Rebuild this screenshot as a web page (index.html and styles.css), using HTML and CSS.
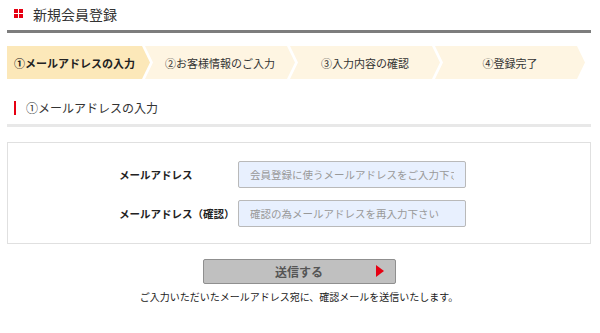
FILE: index.html
```html
<!DOCTYPE html>
<html lang="ja">
<head>
<meta charset="utf-8">
<link rel="stylesheet" href="styles.css">
</head>
<body>
<div class="page">
  <header class="page-head">
    <span class="head-icon"><i></i><i></i><i></i><i></i></span>
    <h1 class="head-title">新規会員登録</h1>
  </header>

  <ol class="steps">
    <li class="step step-first step-active">①メールアドレスの入力</li>
    <li class="step">②お客様情報のご入力</li>
    <li class="step">③入力内容の確認</li>
    <li class="step">④登録完了</li>
  </ol>

  <h2 class="section-title">①メールアドレスの入力</h2>

  <div class="form-box">
    <div class="form-grid">
      <label class="form-label" for="mail">メールアドレス</label>
      <input class="form-input" id="mail" type="text" placeholder="会員登録に使うメールアドレスをご入力下さい">
      <label class="form-label" for="mail2">メールアドレス（確認）</label>
      <input class="form-input" id="mail2" type="text" placeholder="確認の為メールアドレスを再入力下さい">
    </div>
  </div>

  <div class="actions">
    <button class="submit-btn" type="button"><span class="btn-text">送信する</span><span class="btn-arrow"></span></button>
    <p class="note">ご入力いただいたメールアドレス宛に、確認メールを送信いたします。</p>
  </div>
</div>
</body>
</html>
```

FILE: styles.css
```css
* { box-sizing: border-box; }
html, body { margin: 0; padding: 0; background: #fff; }
body {
  font-family: "Noto Sans CJK JP", "Noto Sans", sans-serif;
  color: #333;
}
.page {
  width: 584px;
  margin-left: 7px;
}
.page-head {
  display: flex;
  align-items: center;
  height: 33px;
  border-bottom: 3px solid #7d7d7d;
  padding-left: 7px;
  padding-bottom: 3px;
}
.head-icon {
  display: grid;
  grid-template-columns: 4px 4px;
  grid-template-rows: 4px 4px;
  gap: 1px;
  margin-right: 10px;
}
.head-icon i { display: block; width: 4px; height: 4px; background: #e60012; }
.head-title {
  margin: 0;
  font-size: 14px;
  font-weight: normal;
  color: #333;
  line-height: 1;
}
.steps {
  list-style: none;
  margin: 13px 0 0;
  padding: 0;
  display: flex;
  height: 33px;
}
.step {
  flex: 0 0 150px;
  margin-right: -5px;
  height: 33px;
  display: flex;
  align-items: center;
  justify-content: center;
  padding: 0 8px;
  font-size: 11px;
  color: #333;
  background: #fef5e2;
  white-space: nowrap;
  clip-path: polygon(0 0, calc(100% - 8px) 0, 100% 50%, calc(100% - 8px) 100%, 0 100%, 8px 50%);
}
.step-first {
  clip-path: polygon(0 0, calc(100% - 8px) 0, 100% 50%, calc(100% - 8px) 100%, 0 100%);
  padding: 0 8px 0 0;
  flex-basis: 143px;
}
.step-active {
  background: #fce8b9;
  font-weight: bold;
  color: #222;
}
.section-title {
  margin: 21px 0 0;
  font-size: 12px;
  font-weight: normal;
  color: #333;
  line-height: 16px;
  padding: 0 0 8px 19px;
  position: relative;
  border-bottom: 3px solid #e8e8e8;
}
.section-title::before {
  content: "";
  position: absolute;
  left: 7px;
  top: 1px;
  width: 2px;
  height: 14px;
  background: #e60012;
}
.form-box {
  margin-top: 15px;
  border: 1px solid #e0e0e0;
  padding: 18px 0 16px 111px;
}
.form-grid {
  display: grid;
  grid-template-columns: 119px 228px;
  row-gap: 12px;
  align-items: center;
}
.form-label {
  font-size: 10.5px;
  font-weight: bold;
  color: #222;
  white-space: nowrap;
}
.form-input {
  width: 228px;
  height: 27px;
  border: 1px solid #b9b9b9;
  border-radius: 2px;
  background: #e8f0fe;
  padding: 0 11px;
  font-family: inherit;
  font-size: 10.5px;
  color: #333;
  outline: none;
}
.form-input::placeholder { color: #999; }
.actions {
  display: flex;
  flex-direction: column;
  align-items: center;
  margin-top: 15px;
}
.submit-btn {
  position: relative;
  width: 193px;
  height: 25px;
  border: 1px solid #8f8f8f;
  border-radius: 2px;
  background: #c0c0c0;
  display: flex;
  align-items: center;
  justify-content: center;
  font-family: inherit;
  font-size: 12px;
  font-weight: bold;
  color: #555;
  padding: 0;
}
.btn-arrow {
  position: absolute;
  right: 11px;
  top: 5px;
  width: 0;
  height: 0;
  border-top: 6px solid transparent;
  border-bottom: 6px solid transparent;
  border-left: 8px solid #e60012;
}
.note {
  margin: 6px 0 0;
  font-size: 10px;
  color: #222;
  line-height: 14px;
}
```
